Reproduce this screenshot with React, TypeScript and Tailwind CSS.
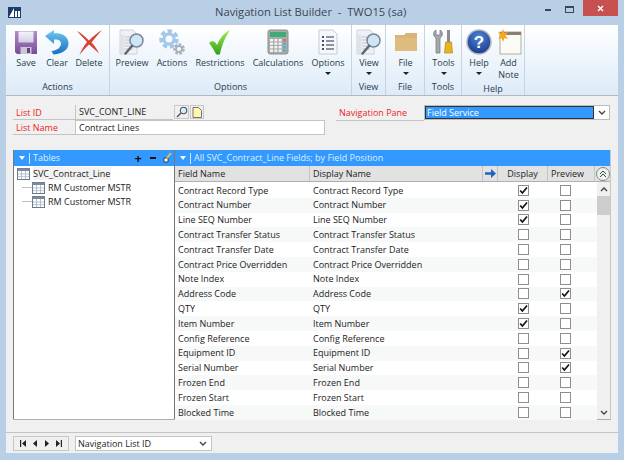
import React from "react";

const font = { fontFamily: '"Open Sans","Noto Sans",sans-serif' };

function Save() {
  return (
    <svg width="26" height="26" viewBox="0 0 26 26">
      <defs>
        <linearGradient id="sv" x1="0" y1="0" x2="0" y2="1">
          <stop offset="0" stopColor="#b48cc8" />
          <stop offset="1" stopColor="#7a4c98" />
        </linearGradient>
        <linearGradient id="svl" x1="0" y1="0" x2="0" y2="1">
          <stop offset="0" stopColor="#f4f4fa" />
          <stop offset="1" stopColor="#cfcfe4" />
        </linearGradient>
      </defs>
      <path d="M2 2h22v23H4l-2-2z" fill="url(#sv)" />
      <path d="M5.500 2.500h15v11h-15z" fill="url(#svl)" />
      <path d="M7.500 18h11v7h-11z" fill="#c9c6d6" />
      <path d="M14 19h3v5h-3z" fill="#6a3f85" />
    </svg>
  );
}
function Clear() {
  return (
    <svg width="26" height="26" viewBox="0 0 26 26">
      <defs>
        <linearGradient id="cl" x1="0" y1="0" x2="0" y2="1">
          <stop offset="0" stopColor="#6cc8f2" />
          <stop offset="1" stopColor="#1a70bc" />
        </linearGradient>
      </defs>
      <path d="M1 7 10 1v3.500c8-1 14 3 14.500 9.500.3 6-5.500 11-15 11.500L7.500 22c6-.5 9.500-4 9.500-7.500 0-3-3-4.500-7-4V15z" fill="url(#cl)" />
    </svg>
  );
}
function Delete() {
  return (
    <svg width="26" height="26" viewBox="0 0 26 26">
      <path d="M1 2c5 2.500 8.500 6 12 9.500C17 7.500 21 4 26 1c-3.500 4-7.500 8.500-10.500 12.500 3 3 5.500 6.500 7.500 11-3.500-3.500-7-6.500-10-9-3.500 3.500-6.500 6.500-9.500 10.500 1.500-4.500 4.500-9 7.500-13C8 9.500 4.500 6 1 2z" fill="#dc4034" />
    </svg>
  );
}
function Preview() {
  return (
    <svg width="26" height="26" viewBox="0 0 26 26">
      <path d="M1 1h13l4 4v20H1z" fill="#eef1f5" stroke="#c6cad0" strokeWidth=".8" />
      <path d="M1.500 6h4v18.500h-4z" fill="#dfe3e8" />
      <path d="M6 8h7M6 11h6M6 14h6M6 17h7M6 20h8" stroke="#c0c6ce" strokeWidth="1.2" />
      <circle cx="17.500" cy="11.500" r="6.500" fill="#cfe6f6" stroke="#7b8a99" strokeWidth="1.5" />
      <path d="m13 17-6.500 7.500" stroke="#5e6670" strokeWidth="2.500" strokeLinecap="round" />
    </svg>
  );
}
function Gear({ cx, cy, r, c }: { cx: number; cy: number; r: number; c: string }) {
  return (
    <g>
      <circle cx={cx} cy={cy} r={r} fill="none" stroke={c} strokeWidth={r * 0.6} strokeDasharray={`${r * 0.55} ${r * 0.35}`} />
      <circle cx={cx} cy={cy} r={r * 0.68} fill="none" stroke={c} strokeWidth={r * 0.42} />
    </g>
  );
}
function Actions() {
  return (
    <svg width="26" height="26" viewBox="0 0 26 26">
      <Gear cx={10} cy={10} r={7.5} c="#a4c8e8" />
      <Gear cx={20} cy={20} r={4.5} c="#a8b2bc" />
    </svg>
  );
}
function Check() {
  return (
    <svg width="26" height="26" viewBox="0 0 26 26">
      <defs>
        <linearGradient id="ck" x1="0" y1="0" x2="0" y2="1">
          <stop offset="0" stopColor="#a8ec50" />
          <stop offset="1" stopColor="#2f9e1c" />
        </linearGradient>
      </defs>
      <path d="M2 14c2-2 4-2 6-1l2 3c3-7 7-12 13-15-4 6-8 14-10 24-1 1-3 1-4 0-2-4-4-7-7-11z" fill="url(#ck)" />
    </svg>
  );
}
function Calc() {
  const keys = [];
  const tint = ["#f4f4f4", "#f4f4f4", "#f4f4f4", "#5eaecb"];
  for (let r = 0; r < 4; r++)
    for (let c = 0; c < 4; c++)
      keys.push(<rect key={`${r}${c}`} x={5 + c * 4.3} y={10 + r * 3.5} width="3" height="2.4" fill={r === 0 && c === 3 ? "#d8688a" : tint[c]} />);
  return (
    <svg width="26" height="26" viewBox="0 0 26 26">
      <rect x="3" y="1" width="20" height="24" rx="2" fill="#a9aca8" stroke="#8d908c" />
      <rect x="5" y="3" width="16" height="5" fill="#3faa78" />
      {keys}
    </svg>
  );
}
function Options() {
  return (
    <svg width="26" height="26" viewBox="0 0 26 26">
      <path d="M4 1h14l4 4v20H4z" fill="#f6f7f9" stroke="#c8ccd2" />
      {[7, 11, 15, 19].map((y) => (
        <g key={y}>
          <rect x="7" y={y} width="2" height="2" fill="#44506a" />
          <path d={`M11 ${y + 1}h8`} stroke="#44506a" strokeWidth="1.2" />
        </g>
      ))}
    </svg>
  );
}
function Folder() {
  return (
    <svg width="22" height="18" viewBox="0 0 22 18">
      <path d="M0 2h9l2-2h11v18H0z" fill="#d9b47a" />
      <path d="M0 5h22v13H0z" fill="#e0bb80" />
    </svg>
  );
}
function Tools() {
  return (
    <svg width="26" height="26" viewBox="0 0 26 26">
      <path d="M5 1c-2 1-3 3-2 6l2 2v15h4V9l2-2c1-3 0-5-2-6v5H5z" fill="#a7a9ab" stroke="#6f7275" strokeWidth=".7" />
      <rect x="16" y="1" width="3" height="12" fill="#8a8c90" />
      <path d="M14.500 13h6l1 11h-8z" fill="#e8b420" stroke="#a87f10" strokeWidth=".6" />
    </svg>
  );
}
function Help() {
  return (
    <svg width="26" height="26" viewBox="0 0 26 26">
      <defs>
        <radialGradient id="hp" cx=".5" cy=".3" r=".8">
          <stop offset="0" stopColor="#4f86d6" />
          <stop offset="1" stopColor="#142f80" />
        </radialGradient>
      </defs>
      <circle cx="13" cy="13" r="12" fill="url(#hp)" stroke="#b0b6c0" strokeWidth="1.5" />
      <text x="13" y="19" textAnchor="middle" fontSize="17" fontWeight="700" fill="#fff" fontFamily="Liberation Sans, sans-serif">?</text>
    </svg>
  );
}
function Note() {
  return (
    <svg width="26" height="26" viewBox="0 0 26 26">
      <rect x="4" y="3" width="21" height="22" fill="#fbfbf6" stroke="#b0aaa0" />
      <rect x="4" y="3" width="21" height="3" fill="#8d7f70" />
      <path d="M7 0l1.500 4L12 3 9.600 6.400 12 10l-3.500-1L7 13 5.500 9 2 10l2.400-3.600L2 3l3.500 1z" fill="#f4a81e" />
    </svg>
  );
}
function Caret() {
  return <div className="mx-auto mt-[3px] h-0 w-0 border-x-[3px] border-t-[3px] border-x-transparent border-t-[#222]" />;
}

function Btn({ w, label, icon, caret, two }: { w: string; label: string; icon: React.ReactNode; caret?: boolean; two?: boolean }) {
  return (
    <div className={`${w} flex shrink-0 flex-col items-center`}>
      <div className="flex h-[27px] items-center justify-center">{icon}</div>
      <div className={`mt-[2px] text-center text-[9px] leading-[12px] text-[#2a3a4a] ${two ? "w-[24px]" : ""}`}>{label}</div>
      {caret && <Caret />}
    </div>
  );
}

function Group({ w, title, pl, children }: { w: string; title: string; pl?: string; children: React.ReactNode }) {
  return (
    <div className={`${w} flex shrink-0 flex-col border-r border-[#c6d3e0]`}>
      <div className={`flex flex-1 pt-[3px] ${pl ?? ""}`}>{children}</div>
      <div className="h-[16px] pt-[1px] text-center text-[9px] leading-[13px] text-[#2a3a4a]">{title}</div>
    </div>
  );
}

function Box({ on }: { on: boolean }) {
  return (
    <div className="flex h-[11px] w-[11px] items-center justify-center border border-[#8e8e8e] bg-white">
      {on && (
        <svg width="9" height="9" viewBox="0 0 9 9">
          <path d="M1.200 4.500 3.400 7 8 1.500" fill="none" stroke="#111" strokeWidth="1.7" />
        </svg>
      )}
    </div>
  );
}

function TableIcon() {
  return (
    <svg width="13" height="12" viewBox="0 0 13 12" className="shrink-0">
      <rect x=".5" y=".5" width="12" height="11" fill="#fff" stroke="#6b7a8c" />
      <rect x=".5" y=".5" width="12" height="2.500" fill="#7b8aa0" />
      <path d="M4.500 3v8M8.500 3v8M1 6h11M1 8.700h11" stroke="#a9b3c0" strokeWidth=".8" />
    </svg>
  );
}

function Chevron() {
  return (
    <svg width="8" height="5" viewBox="0 0 8 5">
      <path d="m1 1 3 3 3-3" fill="none" stroke="#444" strokeWidth="1.400" />
    </svg>
  );
}

function BarCaret() {
  return (
    <div className="flex items-center gap-[4px]">
      <div className="h-0 w-0 border-x-[3.5px] border-t-[4px] border-x-transparent border-t-white" />
      <div className="h-[11px] w-px bg-[#cfe4ff]" />
    </div>
  );
}

const rows: [string, boolean, boolean][] = [
  ["Contract Record Type", true, false],
  ["Contract Number", true, false],
  ["Line SEQ Number", true, false],
  ["Contract Transfer Status", false, false],
  ["Contract Transfer Date", false, false],
  ["Contract Price Overridden", false, false],
  ["Note Index", false, false],
  ["Address Code", false, true],
  ["QTY", true, false],
  ["Item Number", true, false],
  ["Config Reference", false, false],
  ["Equipment ID", false, true],
  ["Serial Number", false, true],
  ["Frozen End", false, false],
  ["Frozen Start", false, false],
  ["Blocked Time", false, false],
];

export default function App() {
  return (
    <div style={font} className="flex h-[460px] w-[624px] flex-col overflow-hidden bg-[#b9cfe5] text-[9px] text-[#222]">
      {/* title bar */}
      <div className="flex h-[25px] shrink-0 items-start">
        <div className="ml-[8px] mt-[7px] flex h-[11px] w-[13px] items-center justify-center bg-[#1c3a6e]">
          <svg width="11" height="9" viewBox="0 0 11 9">
            <path d="M0 9 5 0v9zM6 3h2v6H6zM9 3h2v6H9z" fill="#fff" />
          </svg>
        </div>
        <div className="flex-1 pt-[3px] pl-[194px] text-[11.2px] leading-[18px] whitespace-pre text-[#3a4656]">Navigation List Builder  -  TWO15 (sa)</div>
        <div className="flex items-start">
          <div className="mt-[9px] mr-[14px] h-[2px] w-[6px] bg-[#3a4656]" />
          <div className="mt-[6px] mr-[9px] h-[7px] w-[9px] border border-t-2 border-[#3a4656]" />
          <div className="mr-[6px] flex h-[16px] w-[35px] items-center justify-center bg-[#c75050]">
            <svg width="7" height="7" viewBox="0 0 7 7">
              <path d="m1 1 5 5M6 1 1 6" stroke="#fff" strokeWidth="1.400" />
            </svg>
          </div>
        </div>
      </div>

      {/* window body */}
      <div className="mx-[6px] mb-[7px] flex min-h-0 flex-1 flex-col bg-[#f0f0f0]">
        {/* ribbon */}
        <div className="flex h-[71px] shrink-0 border-b border-[#b4b8bc] bg-gradient-to-b from-white to-[#dcebf8]">
          <Group w="w-[104px]" title="Actions" pl="pl-[5px]">
            <Btn w="w-[30px]" label="Save" icon={<Save />} />
            <Btn w="w-[32px]" label="Clear" icon={<Clear />} />
            <Btn w="w-[32px]" label="Delete" icon={<Delete />} />
          </Group>
          <Group w="w-[242px]" title="Options">
            <Btn w="w-[44px]" label="Preview" icon={<Preview />} />
            <Btn w="w-[36px]" label="Actions" icon={<Actions />} />
            <Btn w="w-[60px]" label="Restrictions" icon={<Check />} />
            <Btn w="w-[56px]" label="Calculations" icon={<Calc />} />
            <Btn w="w-[44px]" label="Options" icon={<Options />} caret />
          </Group>
          <Group w="w-[34px]" title="View">
            <Btn w="w-[34px]" label="View" icon={<Preview />} caret />
          </Group>
          <Group w="w-[39px]" title="File">
            <Btn w="w-[39px]" label="File" icon={<Folder />} caret />
          </Group>
          <Group w="w-[37px]" title="Tools">
            <Btn w="w-[37px]" label="Tools" icon={<Tools />} caret />
          </Group>
          <Group w="w-[63px]" title="Help" pl="pl-[2px]">
            <Btn w="w-[30px]" label="Help" icon={<Help />} caret />
            <Btn w="w-[29px]" label="Add Note" icon={<Note />} two />
          </Group>
        </div>

        {/* header form */}
        <div className="flex h-[54px] shrink-0 px-[7px] pt-[9px]">
          <div className="flex w-[312px] flex-col">
            <div className="flex h-[15px]">
              <div className="w-[62px] border-b border-[#c4c4c4] pl-[3px] leading-[15px] text-[#ee1c25]">List ID</div>
              <div className="w-[98px] border-b border-l border-[#c4c4c4] pl-[3px] leading-[14px]">SVC_CONT_LINE</div>
              <div className="ml-px flex h-[14px] w-[15px] items-center justify-center border border-[#c8c8c8]">
                <svg width="12" height="12" viewBox="0 0 12 12">
                  <circle cx="7.500" cy="4.500" r="3.200" fill="#d8ecf8" stroke="#4c5560" strokeWidth="1.100" />
                  <path d="m5 7-4 4" stroke="#4c5560" strokeWidth="1.500" />
                </svg>
              </div>
              <div className="ml-px flex h-[14px] w-[14px] items-center justify-center border border-[#c8c8c8]">
                <svg width="10" height="11" viewBox="0 0 10 11">
                  <path d="M1 .5h5.500l3 3v7H1z" fill="#fdf6b0" stroke="#555" strokeWidth=".8" />
                </svg>
              </div>
            </div>
            <div className="flex h-[15px]">
              <div className="w-[62px] border-b border-[#c4c4c4] pl-[3px] leading-[15px] text-[#ee1c25]">List Name</div>
              <div className="h-[15px] w-[250px] border border-[#c4c4c4] bg-white pl-[3px] leading-[13px]">Contract Lines</div>
            </div>
          </div>
          <div className="ml-[11px] flex h-[16px] items-start">
            <div className="h-[16px] w-[88px] border-b border-[#c4c4c4] pl-[3px] leading-[15px] text-[#ee1c25]">Navigation Pane</div>
            <div className="flex h-[15px] w-[186px] items-center border border-[#bdbdbd] bg-white">
              <div className="h-[13px] w-[169px] border border-[#333] bg-[#3399ff] pl-[1px] leading-[11px] text-white">Field Service</div>
              <div className="flex flex-1 justify-center">
                <Chevron />
              </div>
            </div>
          </div>
        </div>

        {/* panels */}
        <div className="mx-[7px] flex h-[270px] shrink-0 border-b border-[#aeaeae]">
          {/* tree */}
          <div className="flex w-[162px] shrink-0 flex-col border-x border-[#777] bg-white">
            <div className="flex h-[16px] items-center bg-[#3399ff] pl-[5px] text-[#dff0ff]">
              <BarCaret />
              <span className="ml-[3px] flex-1">Tables</span>
              <span className="text-[13px] leading-none font-bold text-[#111]">+</span>
              <div className="ml-[8px] h-[2px] w-[6px] bg-[#111]" />
              <svg width="9" height="10" viewBox="0 0 9 10" className="ml-[7px] mr-[2px]">
                <path d="M1 5h4v4H1z" fill="#fff" stroke="#222" strokeWidth=".8" />
                <path d="m4 5 4-5" stroke="#e8c040" strokeWidth="2" />
              </svg>
            </div>
            <div className="flex items-center gap-[3px] pl-[3px] pt-[1px]">
              <TableIcon />
              <span className="bg-[#f2f2f2] pr-px text-[9px] leading-[13px]">SVC_Contract_Line</span>
            </div>
            {[0, 1].map((i) => (
              <div key={i} className="mt-[1.5px] flex h-[12.5px] items-center pl-[8px]">
                <div className="h-px w-[10px] bg-[#c0c0c0]" />
                <TableIcon />
                <span className="ml-[3px] text-[9px] leading-[13px]">RM Customer MSTR</span>
              </div>
            ))}
          </div>

          {/* table */}
          <div className="flex min-w-0 flex-1 flex-col border-r border-[#c8c8c8] bg-white">
            <div className="flex h-[16px] shrink-0 items-center bg-[#3399ff] pl-[5px] text-[#dff0ff]">
              <BarCaret />
              <span className="ml-[3px]">All SVC_Contract_Line Fields; by Field Position</span>
            </div>
            <div className="flex h-[16px] shrink-0 border-b border-[#b0b0b0] bg-[#e2e2e2]">
              <div className="w-[135px] border-r border-[#c4c4c4] pl-[3px] leading-[15px]">Field Name</div>
              <div className="w-[173px] border-r border-[#c4c4c4] pl-[3px] leading-[15px]">Display Name</div>
              <div className="flex w-[15px] items-center justify-center border-r border-[#c4c4c4]">
                <svg width="11" height="9" viewBox="0 0 11 9">
                  <path d="M0 3.200h6V0l5 4.500L6 9V5.800H0z" fill="#1f62c0" />
                </svg>
              </div>
              <div className="w-[50px] border-r border-[#c4c4c4] text-center leading-[15px]">Display</div>
              <div className="w-[47px] border-r border-[#c4c4c4] pl-[3px] leading-[15px]">Preview</div>
              <div className="flex flex-1 items-center justify-center">
                <div className="flex h-[14px] w-[14px] items-center justify-center rounded-full border border-[#7d8a7d] bg-[#eef2ee]">
                  <svg width="8" height="8" viewBox="0 0 8 8">
                    <path d="m1 4 3-3 3 3M1 7l3-3 3 3" fill="none" stroke="#3c4a3c" strokeWidth="1" />
                  </svg>
                </div>
              </div>
            </div>
            <div className="flex min-h-0 flex-1">
              <div className="flex w-[423px] flex-col pt-px">
                {rows.map(([n, d, p], i) => (
                  <div key={n} className={`flex h-[14.8px] shrink-0 items-center ${i % 2 ? "bg-[#f7f9f9]" : "bg-white"}`}>
                    <div className="w-[135px] pl-[3px]">{n}</div>
                    <div className="w-[173px] pl-[3px]">{n}</div>
                    <div className="w-[15px]" />
                    <div className="flex w-[50px] justify-center"><Box on={d} /></div>
                    <div className="flex w-[34px] justify-center"><Box on={p} /></div>
                  </div>
                ))}
              </div>
              <div className="flex w-[13px] flex-col items-center bg-[#f0f0f0]">
                <div className="flex h-[14px] items-center justify-center">
                  <div className="rotate-180"><Chevron /></div>
                </div>
                <div className="h-[19px] w-full bg-[#cdcdcd]" />
                <div className="flex-1" />
                <div className="flex h-[13px] items-center justify-center">
                  <Chevron />
                </div>
              </div>
            </div>
          </div>
        </div>

        {/* bottom */}
        <div className="mt-[12px] flex flex-1 items-start border-t border-[#c4c4c4] pt-[3px] pl-[7px]">
          <div className="flex h-[15px] w-[56px] items-center justify-around border border-[#c8c8c8] px-[2px]">
            <svg width="6" height="7" viewBox="0 0 6 7"><path d="M0 0h1.200v7H0zM6 0v7L2 3.500z" fill="#222" /></svg>
            <svg width="4" height="7" viewBox="0 0 4 7"><path d="M4 0v7L0 3.500z" fill="#222" /></svg>
            <svg width="4" height="7" viewBox="0 0 4 7"><path d="M0 0v7l4-3.500z" fill="#222" /></svg>
            <svg width="6" height="7" viewBox="0 0 6 7"><path d="M0 0v7l4-3.500zM4.800 0H6v7H4.800z" fill="#222" /></svg>
          </div>
          <div className="ml-[6px] flex h-[15px] w-[137px] items-center justify-between border border-[#c4c4c4] bg-white pl-[2px] pr-[4px]">
            <span>Navigation List ID</span>
            <Chevron />
          </div>
        </div>
      </div>
    </div>
  );
}
